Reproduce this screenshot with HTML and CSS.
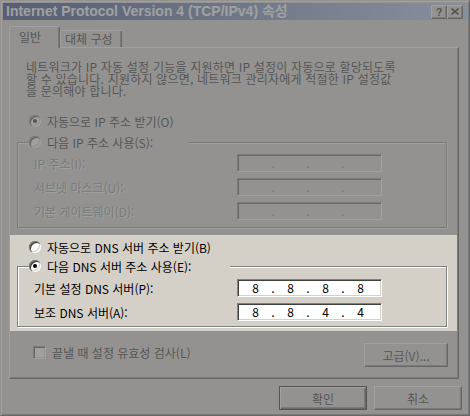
FILE: index.html
```html
<!DOCTYPE html>
<html lang="ko">
<head>
  <meta charset="UTF-8">
  <meta name="viewport" content="width=device-width, initial-scale=1.0">
  <title>Internet Protocol Version 4 (TCP/IPv4) 속성</title>
  <link rel="stylesheet" href="styles.css">
</head>
<body>

  <div class="window">
    <div class="titlebar">
      <span class="title">Internet Protocol Version 4 (TCP/IPv4) 속성</span>
      <div class="caption-buttons">
        <span class="cap-btn help">?</span>
        <span class="cap-btn close">
          <svg width="8" height="7" viewBox="0 0 8 7"><path d="M0.5 0.5 L7.5 6.5 M7.5 0.5 L0.5 6.5" stroke="#000" stroke-width="1.6" fill="none"/></svg>
        </span>
      </div>
    </div>

    <div class="tabs">
      <span class="tab active">일반</span>
      <span class="tab">대체 구성</span>
    </div>

    <div class="panel">
      <div class="intro">
        <div>네트워크가 IP 자동 설정 기능을 지원하면 IP 설정이 자동으로 할당되도록</div>
        <div>할 수 있습니다. 지원하지 않으면, 네트워크 관리자에게 적절한 IP 설정값</div>
        <div>을 문의해야 합니다.</div>
      </div>

      <div class="option first"><span class="radio checked"></span>자동으로 IP 주소 받기(O)</div>

      <!-- 수동 IP 설정 (비활성) -->
      <fieldset class="group">
        <legend class="option legend-ip"><span class="radio"></span>다음 IP 주소 사용(S):</legend>
        <div class="field disabled">
          <span class="label">IP 주소(I):</span>
          <span class="ipbox"><span class="octet"></span><span class="dot">.</span><span class="octet"></span><span class="dot">.</span><span class="octet"></span><span class="dot">.</span><span class="octet"></span></span>
        </div>
        <div class="field disabled">
          <span class="label">서브넷 마스크(U):</span>
          <span class="ipbox"><span class="octet"></span><span class="dot">.</span><span class="octet"></span><span class="dot">.</span><span class="octet"></span><span class="dot">.</span><span class="octet"></span></span>
        </div>
        <div class="field disabled">
          <span class="label">기본 게이트웨이(D):</span>
          <span class="ipbox"><span class="octet"></span><span class="dot">.</span><span class="octet"></span><span class="dot">.</span><span class="octet"></span><span class="dot">.</span><span class="octet"></span></span>
        </div>
      </fieldset>

      <!-- DNS 설정 (강조 영역) -->
      <div class="highlight">
        <div class="option"><span class="radio"></span>자동으로 DNS 서버 주소 받기(B)</div>
        <fieldset class="group dns">
          <legend class="option legend-dns"><span class="radio checked"></span>다음 DNS 서버 주소 사용(E):</legend>
          <div class="field">
            <span class="label">기본 설정 DNS 서버(P):</span>
            <span class="ipbox"><span class="octet">8</span><span class="dot">.</span><span class="octet">8</span><span class="dot">.</span><span class="octet">8</span><span class="dot">.</span><span class="octet">8</span></span>
          </div>
          <div class="field">
            <span class="label">보조 DNS 서버(A):</span>
            <span class="ipbox"><span class="octet">8</span><span class="dot">.</span><span class="octet">8</span><span class="dot">.</span><span class="octet">4</span><span class="dot">.</span><span class="octet">4</span></span>
          </div>
        </fieldset>
      </div>

      <div class="footer-row">
        <div class="check"><span class="checkbox"></span>끝낼 때 설정 유효성 검사(L)</div>
        <span class="btn advanced">고급(V)...</span>
      </div>
    </div>

    <div class="dialog-buttons">
      <span class="btn default">확인</span>
      <span class="btn">취소</span>
    </div>
  </div>

</body>
</html>
```

FILE: styles.css
```css
body {
  margin: 0;
  overflow: hidden;
  background-color: #d4d0c8;
  font-family: "Noto Sans CJK KR", sans-serif;
  font-size: 12px;
  color: #000;
}
.window {
  width: 470px;
  height: 416px;
  box-sizing: border-box;
  padding: 2px;
  border: 1px solid;
  border-color: #d4d0c8 #404040 #404040 #d4d0c8;
  box-shadow: inset 1px 1px 0 #fff, inset -1px -1px 0 #808080;
  background-color: #d4d0c8;
}
.titlebar {
  height: 17px;
  display: flex;
  align-items: center;
  justify-content: space-between;
  padding: 0 4px 0 3px;
  background: linear-gradient(to right, #0a246a, #a6caf0);
}
.title {
  color: #fff;
  font-family: "Liberation Sans", "Noto Sans CJK KR", sans-serif;
  font-weight: bold;
  font-size: 14px;
  line-height: 17px;
  white-space: nowrap;
}
.caption-buttons {
  display: flex;
}
.cap-btn {
  width: 16px;
  height: 14px;
  box-sizing: border-box;
  display: flex;
  align-items: center;
  justify-content: center;
  background-color: #d4d0c8;
  border: 1px solid;
  border-color: #fff #404040 #404040 #fff;
  box-shadow: inset -1px -1px 0 #808080;
  font-family: "Liberation Sans", sans-serif;
  font-weight: bold;
  font-size: 11px;
  line-height: 12px;
}

/* 탭 */
.tabs {
  display: flex;
  align-items: flex-end;
  height: 22px;
  margin: 6px 0 -1px 6px;
  position: relative;
  z-index: 1;
}
.tab {
  box-sizing: border-box;
  height: 17px;
  width: 62px;
  margin-bottom: 1px;
  padding-left: 4px;
  line-height: 16px;
  border: 1px solid;
  border-bottom: none;
  border-color: #fff #404040 #fff #fff;
  border-radius: 2px 2px 0 0;
  box-shadow: inset -1px 0 0 #808080;
  background-color: #d4d0c8;
  white-space: nowrap;
}
.tab.active {
  width: 51px;
  height: 22px;
  margin-bottom: 0;
  padding-left: 9px;
  line-height: 19px;
}

.panel {
  width: 450px;
  height: 332px;
  box-sizing: border-box;
  margin-left: 6px;
  border: 1px solid;
  border-color: #fff #404040 #404040 #fff;
  box-shadow: inset -1px -1px 0 #808080;
}
.intro {
  margin: 13px 0 0 16px;
  white-space: nowrap;
  letter-spacing: 0.2px;
}
.intro div {
  height: 12px;
  line-height: 12px;
}
.option {
  display: flex;
  align-items: center;
  height: 16px;
  white-space: nowrap;
}
.option.first {
  margin: 16px 0 0 19px;
}
.radio {
  position: relative;
  width: 12px;
  height: 12px;
  margin-right: 6px;
  border-radius: 50%;
  background-color: #fff;
  box-shadow: inset 1px 1px 0 #808080, inset 2px 2px 0 #404040, inset -1px -1px 0 #fff, inset -2px -2px 0 #d4d0c8;
  flex-shrink: 0;
}
.radio.checked::after {
  content: "";
  position: absolute;
  left: 4px;
  top: 4px;
  width: 4px;
  height: 4px;
  border-radius: 50%;
  background-color: #000;
}

/* 그룹 상자 */
.group {
  width: 430px;
  box-sizing: border-box;
  margin: 5px 0 0 7px;
  padding: 1px 0 4px 0;
  border: 1px solid #808080;
  box-shadow: inset 1px 1px 0 #fff, 1px 1px 0 #fff;
  min-width: 0;
}
.group legend {
  margin-left: 11px;
  padding: 0;
  background-color: #d4d0c8;
}
.legend-ip {
  width: 160px;
}
.legend-dns {
  width: 201px;
}
.field {
  display: flex;
  align-items: center;
  height: 24px;
  margin-left: 16px;
}
.label {
  width: 203px;
  white-space: nowrap;
}
.disabled .label {
  color: #808080;
  text-shadow: 1px 1px 0 #fff;
}
.ipbox {
  display: flex;
  align-items: center;
  width: 145px;
  height: 18px;
  box-sizing: border-box;
  padding-left: 1px;
  border: 1px solid;
  border-color: #808080 #fff #fff #808080;
  box-shadow: inset 1px 1px 0 #404040, inset -1px -1px 0 #d4d0c8;
  background-color: #fff;
  line-height: 14px;
}
.disabled .ipbox {
  background-color: #d4d0c8;
  color: #808080;
}
.octet {
  width: 33px;
  text-align: center;
}
.dot {
  width: 2px;
  display: flex;
  justify-content: center;
}

.highlight {
  position: relative;
  margin: 7px 1px 0 0;
  padding: 4px 0 4px 0;
  background-color: #d4d0c8;
}
.highlight > .option {
  margin-left: 19px;
}
.group.dns {
  margin-top: 3px;
  padding: 2px 0 2px 0;
}
/* 강조 영역 밖을 어둡게 */
.highlight::after {
  content: "";
  position: absolute;
  left: 0;
  top: 0;
  right: 0;
  bottom: 0;
  box-shadow: 0 0 0 1000px rgba(120, 120, 120, 0.7);
  pointer-events: none;
  z-index: 5;
}

.footer-row {
  display: flex;
  justify-content: space-between;
  align-items: flex-start;
}
.check {
  display: flex;
  align-items: center;
  height: 16px;
  margin: 13px 0 0 23px;
}
.checkbox {
  width: 13px;
  height: 13px;
  box-sizing: border-box;
  margin-right: 6px;
  border: 1px solid;
  border-color: #808080 #fff #fff #808080;
  box-shadow: inset 1px 1px 0 #404040, inset -1px -1px 0 #d4d0c8;
  background-color: #fff;
}
.btn {
  display: flex;
  align-items: center;
  justify-content: center;
  width: 88px;
  height: 24px;
  box-sizing: border-box;
  border: 1px solid;
  border-color: #fff #404040 #404040 #fff;
  box-shadow: inset -1px -1px 0 #808080;
  background-color: #d4d0c8;
}
.btn.advanced {
  width: 84px;
  margin: 12px 10px 0 0;
}
.btn.default {
  border-color: #000;
  box-shadow: inset 1px 1px 0 #fff, inset -1px -1px 0 #404040, inset -2px -2px 0 #808080;
}
.dialog-buttons {
  display: flex;
  justify-content: flex-end;
  gap: 7px;
  margin: 7px 5px 0 0;
}
```
